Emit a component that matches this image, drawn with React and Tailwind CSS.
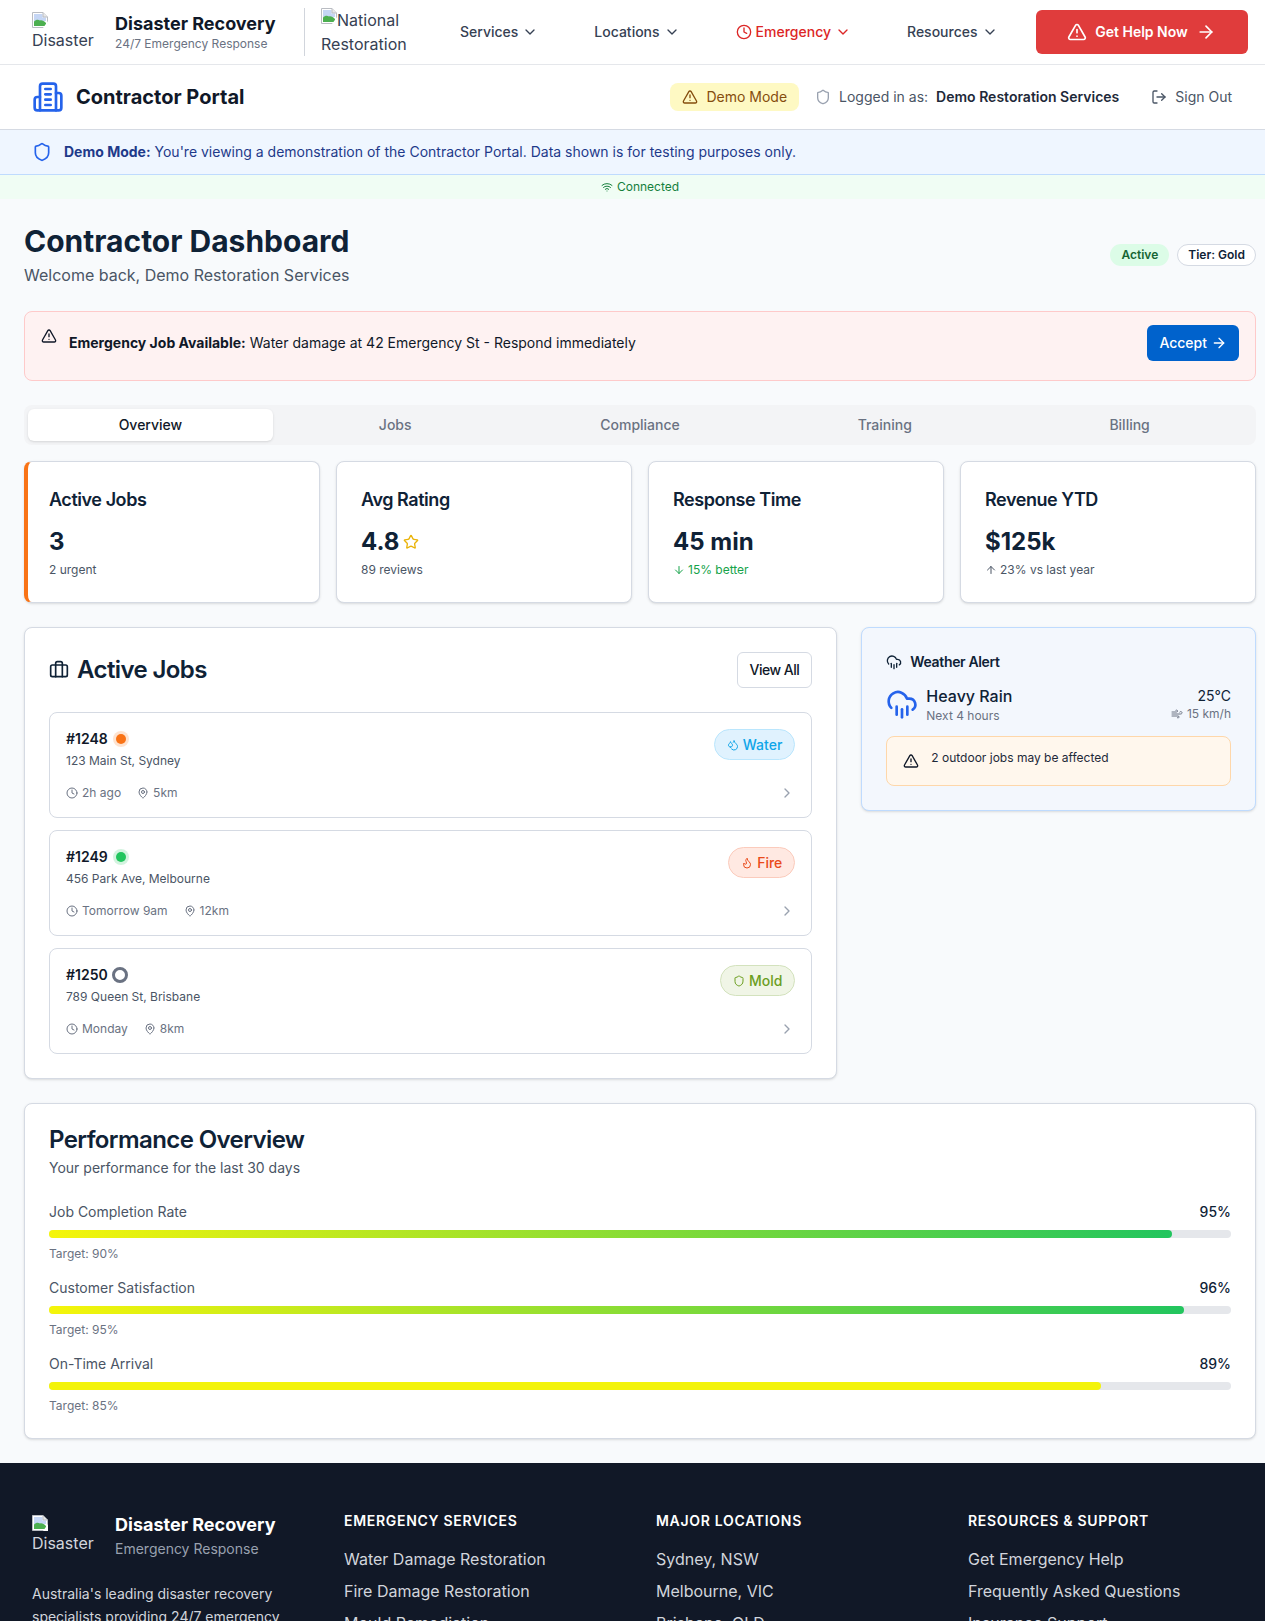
import React from "react";
import {
  ChevronDown, ChevronRight, Clock, TriangleAlert, ArrowRight, ArrowDown, ArrowUp,
  Shield, LogOut, Wifi, Star, Briefcase, MapPin, Droplets, Flame, CloudRain, Wind,
} from "lucide-react";

function BrokenIcon() {
  return (
    <svg width="16" height="16" viewBox="0 0 16 16" className="block shrink-0">
      <path d="M0.5 0.5H11L15.5 5V15.5H0.5Z" fill="#fff" stroke="#b9bcc2" strokeWidth="1" />
      <path d="M2 2H10.5V5.5H14V9H2Z" fill="#c5d6f5" />
      <path d="M2 14V9.5C4 7.5 6 7 8 8.5C10 8 12 9 14 11V14Z" fill="#4caf50" />
      <path d="M11 0.5V5H15.5" fill="#e8e8e8" stroke="#b9bcc2" strokeWidth="1" />
      <path d="M16 9L11 16H16Z" fill="#fff" />
    </svg>
  );
}

function BuildingIcon() {
  return (
    <svg width="32" height="32" viewBox="0 0 24 24" fill="none" stroke="#2563eb" strokeWidth="2" strokeLinecap="round" strokeLinejoin="round" className="shrink-0">
      <path d="M6 22V4a2 2 0 0 1 2-2h8a2 2 0 0 1 2 2v18Z" />
      <path d="M6 12H4a2 2 0 0 0-2 2v6a2 2 0 0 0 2 2h2" />
      <path d="M18 9h2a2 2 0 0 1 2 2v9a2 2 0 0 1-2 2h-2" />
      <path d="M10 6h4" />
      <path d="M10 10h4" />
      <path d="M10 14h4" />
      <path d="M10 18h4" />
    </svg>
  );
}

function LogoImage({ tone }) {
  return (
    <div className={`w-[67px] shrink-0 text-base leading-6 ${tone}`}>
      <BrokenIcon />
      <div>Disaster</div>
    </div>
  );
}

function NavItem({ label, danger, icon }) {
  return (
    <div className={`flex items-center gap-1 text-sm font-medium ${danger ? "text-[#dc2626]" : "text-gray-700"}`}>
      {icon}
      <span>{label}</span>
      <ChevronDown className="h-4 w-4" />
    </div>
  );
}

function SiteHeader() {
  return (
    <header className="flex h-[65px] items-center border-b border-gray-200 bg-white pl-8 pr-[17px] shadow-sm">
      <div className="flex items-center gap-4">
        <LogoImage tone="text-gray-700" />
        <div className="w-[161px]">
          <div className="whitespace-nowrap text-lg font-bold leading-6 text-gray-900">Disaster Recovery</div>
          <div className="whitespace-nowrap text-xs text-gray-500">24/7 Emergency Response</div>
        </div>
      </div>
      <div className="ml-7 h-12 w-px bg-gray-300" />
      <div className="ml-4 w-[91px] text-base leading-6 text-gray-700">
        <div className="flex items-start">
          <BrokenIcon />
          <span>National</span>
        </div>
        <div>Restoration</div>
      </div>
      <nav className="ml-12 flex items-center gap-14">
        <NavItem label="Services" />
        <NavItem label="Locations" />
        <NavItem label="Emergency" danger icon={<Clock className="h-4 w-4" />} />
        <NavItem label="Resources" />
      </nav>
      <button className="ml-[38px] flex h-11 w-[212px] items-center justify-center gap-2 rounded-md bg-[#e03c3c] text-sm font-semibold text-white">
        <TriangleAlert className="h-5 w-5" />
        <span>Get Help Now</span>
        <ArrowRight className="h-5 w-5" />
      </button>
    </header>
  );
}

function PortalBar() {
  return (
    <div className="flex h-[65px] items-center justify-between border-b border-[#d5dae3] bg-white pl-8 pr-[33px]">
      <div className="flex items-center gap-3">
        <BuildingIcon />
        <div className="text-xl font-bold text-gray-900">Contractor Portal</div>
      </div>
      <div className="flex items-center text-sm">
        <div className="flex h-7 items-center gap-2 rounded-lg bg-[#fef9c3] px-3 text-[#854d0e]">
          <TriangleAlert className="h-4 w-4" />
          <span>Demo Mode</span>
        </div>
        <Shield className="ml-4 h-4 w-4 text-gray-400" />
        <span className="ml-2 text-gray-600">Logged in as:</span>
        <span className="ml-2 font-semibold text-gray-800">Demo Restoration Services</span>
        <LogOut className="ml-8 h-4 w-4 text-gray-600" />
        <span className="ml-2 text-gray-600">Sign Out</span>
      </div>
    </div>
  );
}

function StatCard({ title, accent, value, extra, sub }) {
  return (
    <div className={`h-[142px] rounded-lg border border-[#d5dae3] bg-white pr-6 pt-6 shadow-sm ${accent ? "border-l-4 border-l-[#f97316] pl-[21px]" : "pl-6"}`}>
      <div className="text-lg font-semibold leading-7 tracking-tight text-[#0f2236]">{title}</div>
      <div className="mt-[12px] flex items-center gap-1 text-2xl font-bold leading-8 text-[#0f2236]">
        <span>{value}</span>
        {extra}
      </div>
      <div className="mt-[4px] flex items-center gap-[3px] text-xs leading-4 text-gray-600">{sub}</div>
    </div>
  );
}

function JobCard({ id, dot, address, when, km, pill }) {
  return (
    <div className="h-[106px] rounded-lg border border-[#d5dae3] bg-white p-4">
      <div className="flex items-start justify-between">
        <div>
          <div className="flex h-5 items-center text-sm font-semibold text-gray-900">
            <span>{id}</span>
            {dot}
          </div>
          <div className="mt-1 text-xs leading-4 text-gray-600">{address}</div>
        </div>
        {pill}
      </div>
      <div className="mt-4 flex h-4 items-center justify-between text-xs text-gray-500">
        <div className="flex items-center">
          <Clock className="h-3 w-3" />
          <span className="ml-1">{when}</span>
          <MapPin className="ml-4 h-3 w-3" />
          <span className="ml-1">{km}</span>
        </div>
        <ChevronRight className="h-4 w-4 text-gray-400" />
      </div>
    </div>
  );
}

function Progress({ label, pct, target, fill }) {
  return (
    <div>
      <div className="flex items-center justify-between text-sm leading-5">
        <span className="text-gray-600">{label}</span>
        <span className="font-medium text-[#0f2236]">{pct}%</span>
      </div>
      <div className="mt-2 h-2 rounded-full bg-gray-200">
        <div className={`h-2 rounded-full ${fill}`} style={{ width: `${pct}%` }} />
      </div>
      <div className="mt-2 text-xs leading-4 text-gray-500">Target: {target}%</div>
    </div>
  );
}

function FooterCol({ title, links }) {
  return (
    <div>
      <div className="text-sm font-semibold uppercase leading-5 tracking-wider text-white">{title}</div>
      <ul className="mt-4 space-y-2 text-base leading-6 text-gray-300">
        {links.map((l) => (
          <li key={l}>{l}</li>
        ))}
      </ul>
    </div>
  );
}

export default function App() {
  return (
    <div className="h-[1621px] overflow-hidden bg-[#f8fafc] font-['Inter',sans-serif]">
      <SiteHeader />
      <PortalBar />
      <div className="flex h-[45px] items-center gap-3 border-b border-[#bfdbfe] bg-[#eff6ff] px-8 text-sm text-[#1e3a8a]">
        <Shield className="h-5 w-5 text-[#2563eb]" />
        <div>
          <span className="font-bold">Demo Mode:</span> You're viewing a demonstration of the Contractor Portal. Data shown is for testing purposes only.
        </div>
      </div>
      <div className="flex h-6 items-center justify-center gap-1 bg-[#f0fdf4] pl-[15px] text-xs text-[#15803d]">
        <Wifi className="h-3 w-3" />
        <span>Connected</span>
      </div>

      <main className="pb-6 pl-6 pr-[9px] pt-6">
        <div className="mb-6 flex items-center justify-between">
          <div>
            <h1 className="text-3xl font-bold leading-9 text-[#0f2236]">Contractor Dashboard</h1>
            <p className="mt-1 text-base leading-6 text-gray-600">Welcome back, Demo Restoration Services</p>
          </div>
          <div className="flex items-center gap-2 text-xs font-semibold">
            <span className="flex h-[22px] items-center rounded-full bg-[#dcfce7] px-[11px] text-[#166534]">Active</span>
            <span className="flex h-[22px] items-center rounded-full border border-[#d5dae3] bg-white px-2.5 text-[#0f2236]">Tier: Gold</span>
          </div>
        </div>

        <div className="mb-6 flex h-[70px] items-start gap-3 rounded-lg border border-[#fecaca] bg-[#fef2f2] p-4">
          <TriangleAlert className="h-4 w-4 shrink-0 text-gray-900" />
          <div className="flex h-9 flex-1 -translate-y-[3px] items-center justify-between text-sm text-gray-900">
            <div>
              <span className="font-bold">Emergency Job Available:</span> Water damage at 42 Emergency St - Respond immediately
            </div>
            <button className="flex h-9 items-center gap-1 rounded-md bg-[#0062cc] px-3 text-sm font-medium text-white">
              Accept
              <ArrowRight className="h-4 w-4" />
            </button>
          </div>
        </div>

        <div className="grid h-10 grid-cols-5 rounded-lg bg-gray-100 p-1 text-sm font-medium text-gray-500">
          <div className="flex items-center justify-center rounded-md bg-white text-gray-900 shadow-sm">Overview</div>
          <div className="flex items-center justify-center">Jobs</div>
          <div className="flex items-center justify-center">Compliance</div>
          <div className="flex items-center justify-center">Training</div>
          <div className="flex items-center justify-center">Billing</div>
        </div>

        <div className="mb-6 mt-4 grid grid-cols-4 gap-4">
          <StatCard accent title="Active Jobs" value="3" sub={<span>2 urgent</span>} />
          <StatCard title="Avg Rating" value="4.8" extra={<Star className="h-4 w-4 text-[#eab308]" />} sub={<span>89 reviews</span>} />
          <StatCard
            title="Response Time"
            value="45 min"
            sub={
              <span className="flex items-center gap-[3px] text-[#16a34a]">
                <ArrowDown className="h-3 w-3" />
                15% better
              </span>
            }
          />
          <StatCard
            title="Revenue YTD"
            value="$125k"
            sub={
              <>
                <ArrowUp className="h-3 w-3" />
                <span>23% vs last year</span>
              </>
            }
          />
        </div>

        <div className="mb-6 grid grid-cols-3 items-start gap-6">
          <section className="col-span-2 rounded-lg border border-[#d5dae3] bg-white p-6 shadow-sm">
            <div className="mb-6 flex h-9 items-center justify-between">
              <div className="flex items-center gap-2 text-[#0f2236]">
                <Briefcase className="h-5 w-5" />
                <h2 className="text-2xl font-semibold tracking-tight">Active Jobs</h2>
              </div>
              <button className="flex h-9 items-center rounded-md border border-[#d5dae3] bg-white px-3 text-sm font-medium tracking-[-0.5px] text-gray-900">View All</button>
            </div>
            <div className="space-y-3">
              <JobCard
                id="#1248"
                address="123 Main St, Sydney"
                when="2h ago"
                km="5km"
                dot={<span className="ml-[8px] h-[10px] w-[10px] rounded-full bg-[#f97316] ring-[3px] ring-[#f97316]/20" />}
                pill={
                  <span className="flex h-[31px] items-center gap-1 rounded-full border border-[#bae6fd] bg-[#e0f2fe] px-3 text-sm font-medium text-[#0ea5e9]">
                    <Droplets className="h-3 w-3" />
                    Water
                  </span>
                }
              />
              <JobCard
                id="#1249"
                address="456 Park Ave, Melbourne"
                when="Tomorrow 9am"
                km="12km"
                dot={<span className="ml-[8px] h-[10px] w-[10px] rounded-full bg-[#22c55e] ring-[3px] ring-[#22c55e]/20" />}
                pill={
                  <span className="flex h-[31px] items-center gap-1 rounded-full border border-[#fbcbbc] bg-[#ffe9e2] px-3 text-sm font-medium text-[#ea4a1a]">
                    <Flame className="h-3 w-3" />
                    Fire
                  </span>
                }
              />
              <JobCard
                id="#1250"
                address="789 Queen St, Brisbane"
                when="Monday"
                km="8km"
                dot={<span className="ml-[4px] h-4 w-4 rounded-full border-[3px] border-gray-500" />}
                pill={
                  <span className="flex h-[31px] items-center gap-1 rounded-full border border-[#d3e2bd] bg-[#f0f5e6] px-3 text-sm font-medium text-[#6b9e1f]">
                    <Shield className="h-3 w-3" />
                    Mold
                  </span>
                }
              />
            </div>
          </section>

          <aside className="rounded-lg border border-[#bfdbfe] bg-[#f3f7fd] p-6 shadow-sm">
            <div className="mb-3 flex h-5 items-center gap-2 text-sm font-semibold tracking-tight text-[#0f2236]">
              <CloudRain className="h-4 w-4" />
              <span>Weather Alert</span>
            </div>
            <div className="mb-3 flex items-center justify-between">
              <div className="flex items-center gap-2">
                <CloudRain className="h-8 w-8 text-[#2563eb]" />
                <div>
                  <div className="text-base font-medium leading-6 text-[#0f2236]">Heavy Rain</div>
                  <div className="text-xs leading-4 text-gray-500">Next 4 hours</div>
                </div>
              </div>
              <div className="text-right">
                <div className="text-sm leading-5 text-[#0f2236]">25°C</div>
                <div className="flex items-center justify-end gap-1 text-xs leading-4 text-gray-500">
                  <Wind className="h-3 w-3" />
                  <span>15 km/h</span>
                </div>
              </div>
            </div>
            <div className="flex h-[50px] items-start gap-3 rounded-lg border border-[#fed7aa] bg-[#fff7ed] p-4">
              <TriangleAlert className="h-4 w-4 shrink-0 text-gray-900" />
              <div className="-translate-y-[3px] text-xs leading-4 text-gray-800">2 outdoor jobs may be affected</div>
            </div>
          </aside>
        </div>

        <section className="rounded-lg border border-[#d5dae3] bg-white p-6 shadow-sm">
          <h2 className="text-2xl font-semibold leading-none tracking-tight text-[#0f2236]">Performance Overview</h2>
          <p className="mt-1.5 text-sm leading-5 text-gray-600">Your performance for the last 30 days</p>
          <div className="mt-6 space-y-4">
            <Progress label="Job Completion Rate" pct={95} target={90} fill="bg-linear-to-r/srgb from-[#f5f50a] to-[#22c55e]" />
            <Progress label="Customer Satisfaction" pct={96} target={95} fill="bg-linear-to-r/srgb from-[#f5f50a] to-[#22c55e]" />
            <Progress label="On-Time Arrival" pct={89} target={85} fill="bg-[#f3f30a]" />
          </div>
        </section>
      </main>

      <footer className="bg-[#111827] pb-12 pl-8 pr-[17px] pt-12">
        <div className="grid grid-cols-4 gap-8">
          <div>
            <div className="flex items-center gap-4">
              <LogoImage tone="text-gray-300" />
              <div>
                <div className="whitespace-nowrap text-lg font-bold leading-7 text-white">Disaster Recovery</div>
                <div className="whitespace-nowrap text-sm leading-5 text-gray-400">Emergency Response</div>
              </div>
            </div>
            <p className="mt-6 text-sm leading-[1.625] text-gray-300">
              Australia's leading disaster recovery specialists providing 24/7 emergency restoration services nationwide.
            </p>
          </div>
          <FooterCol title="Emergency Services" links={["Water Damage Restoration", "Fire Damage Restoration", "Mould Remediation", "Storm Damage Repair"]} />
          <FooterCol title="Major Locations" links={["Sydney, NSW", "Melbourne, VIC", "Brisbane, QLD", "Perth, WA"]} />
          <FooterCol title="Resources & Support" links={["Get Emergency Help", "Frequently Asked Questions", "Insurance Support", "Contact Us"]} />
        </div>
      </footer>
    </div>
  );
}
